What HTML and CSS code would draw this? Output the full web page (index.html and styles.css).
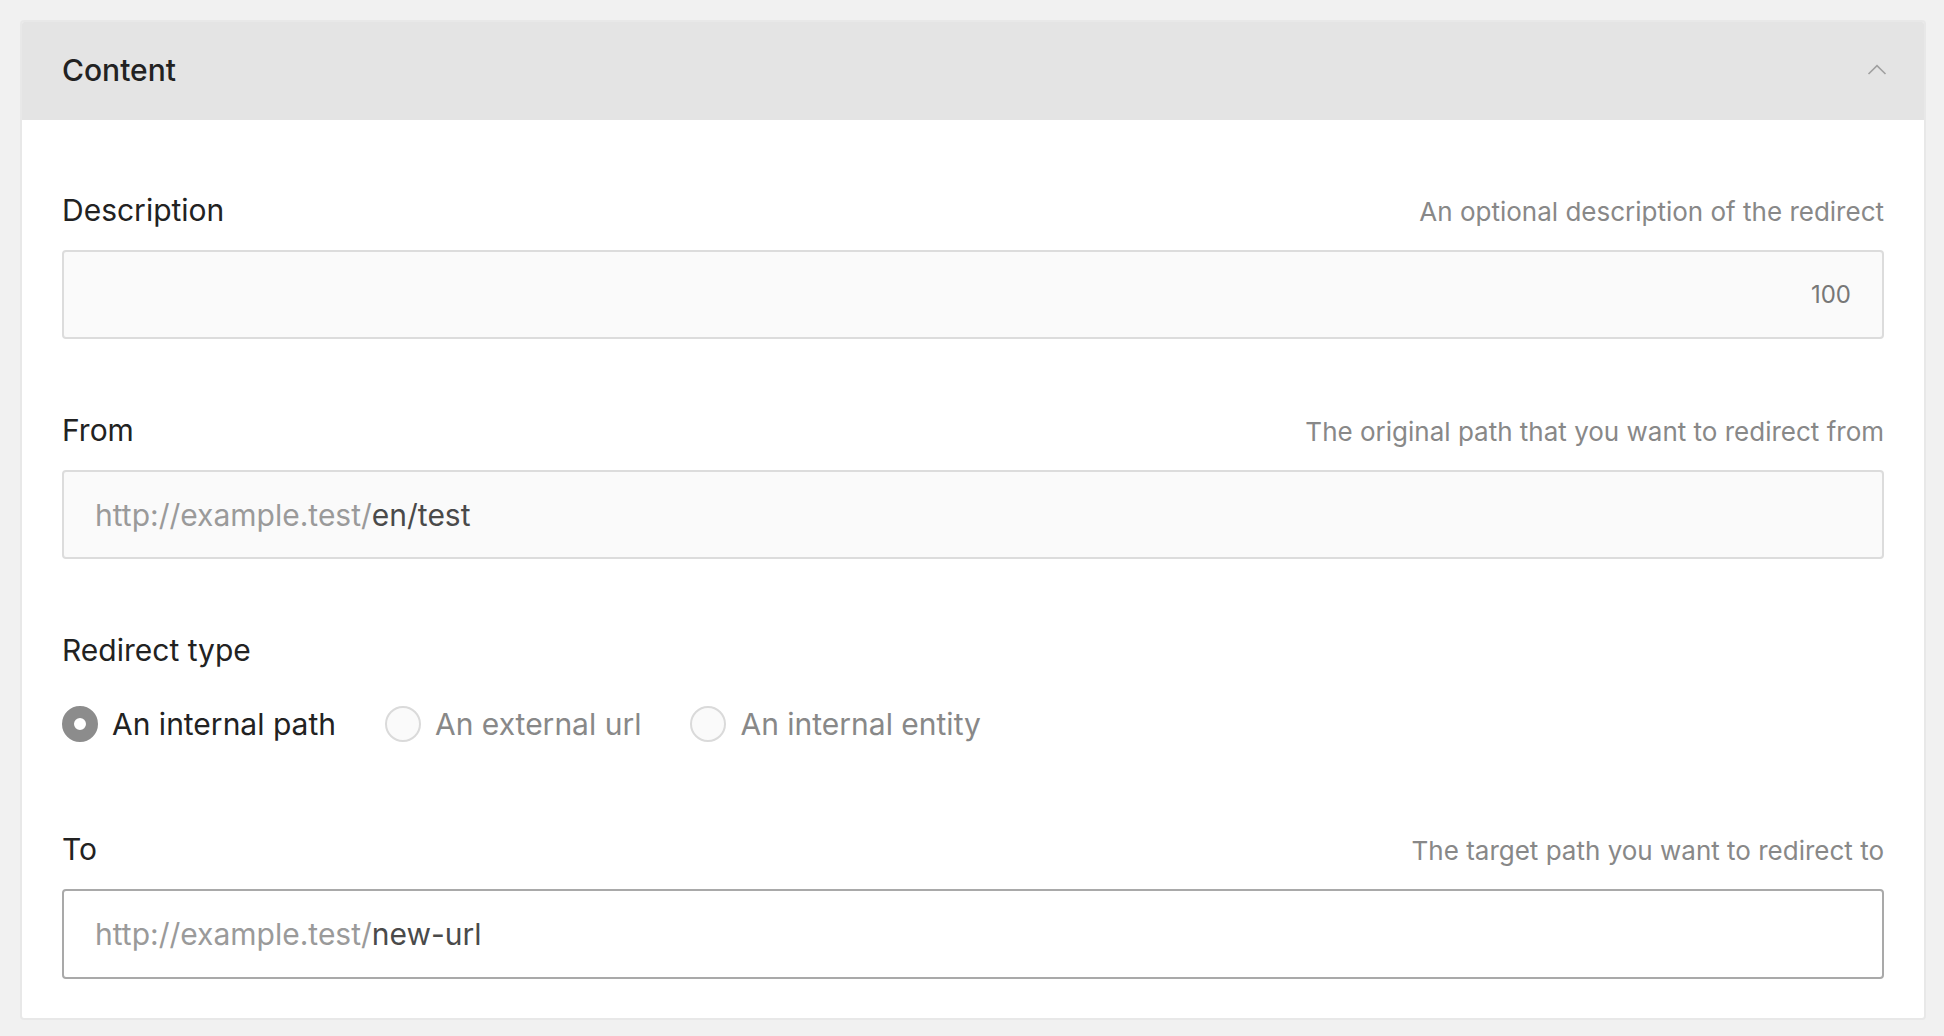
FILE: index.html
```html
<!DOCTYPE html>
<html lang="en">
<head>
<meta charset="utf-8">
<title>Content</title>
<link rel="stylesheet" href="styles.css">
</head>
<body>
<section class="card">
  <header class="card-header">
    <h2 class="card-title">Content</h2>
    <svg class="chevron" width="20" height="11" viewBox="0 0 20 11" aria-hidden="true">
      <polyline points="1.5,10 10,1.6 18.5,10" fill="none" stroke="#a0a0a0" stroke-width="1.6"/>
    </svg>
  </header>
  <div class="card-body">
    <div class="field">
      <div class="field-head">
        <label class="field-label">Description</label>
        <span class="field-hint">An optional description of the redirect</span>
      </div>
      <div class="input input-muted input-end">
        <span class="counter">100</span>
      </div>
    </div>

    <div class="field">
      <div class="field-head">
        <label class="field-label">From</label>
        <span class="field-hint">The original path that you want to redirect from</span>
      </div>
      <div class="input input-muted">
        <span class="prefix">http://example.test/</span><span class="value">en/test</span>
      </div>
    </div>

    <div class="field field-radios">
      <div class="field-head">
        <label class="field-label">Redirect type</label>
      </div>
      <div class="radio-group">
        <div class="radio-option">
          <span class="radio radio-checked"></span>
          <span class="radio-label radio-label-active">An internal path</span>
        </div>
        <div class="radio-option">
          <span class="radio"></span>
          <span class="radio-label">An external url</span>
        </div>
        <div class="radio-option">
          <span class="radio"></span>
          <span class="radio-label">An internal entity</span>
        </div>
      </div>
    </div>

    <div class="field">
      <div class="field-head">
        <label class="field-label">To</label>
        <span class="field-hint">The target path you want to redirect to</span>
      </div>
      <div class="input input-focus">
        <span class="prefix">http://example.test/</span><span class="value">new-url</span>
      </div>
    </div>
  </div>
</section>
</body>
</html>
```

FILE: styles.css
```css
* {
  box-sizing: border-box;
}

html, body {
  margin: 0;
  background: #f1f1f1;
}

body {
  padding: 20px 18px 16px 20px;
  font-family: Inter, "Noto Sans", sans-serif;
  color: #222;
}

.card {
  background: #ffffff;
  border: 2px solid #e8e8e8;
  border-radius: 4px;
  overflow: hidden;
}

.card-header {
  height: 100px;
  margin: -2px -2px 0 -2px;
  background: #e4e4e4;
  display: flex;
  align-items: center;
  justify-content: space-between;
  padding: 0 39px 0 42px;
}

.card-title {
  margin: 0;
  font-size: 30px;
  font-weight: 500;
  line-height: 36px;
  color: #222;
}

.chevron {
  display: block;
  margin-top: -2px;
}

.card-body {
  padding: 72px 40px 39px 40px;
  display: flex;
  flex-direction: column;
  gap: 73px;
}

.field {
  display: flex;
  flex-direction: column;
  gap: 22px;
}

.field-head {
  display: flex;
  justify-content: space-between;
  align-items: baseline;
  height: 36px;
}

.field-label {
  font-size: 30px;
  line-height: 36px;
  color: #222;
}

.field-hint {
  font-size: 26px;
  line-height: 26px;
  color: #888;
}

.input {
  height: 89px;
  border: 2px solid #dcdcdc;
  border-radius: 4px;
  display: flex;
  align-items: center;
  padding: 0 31px;
  font-size: 30px;
  white-space: nowrap;
}

.input-muted {
  background: #fafafa;
}

.input-focus {
  background: #ffffff;
  border-color: #a9a9a9;
  height: 90px;
}

.input-end {
  justify-content: flex-end;
}

.counter {
  font-size: 24px;
  color: #777;
}

.prefix {
  color: #9a9a9a;
}

.value {
  color: #4a4a4a;
}

.field-radios {
  gap: 38px;
  padding-bottom: 16px;
}

.radio-group {
  display: flex;
  align-items: center;
  gap: 49px;
}

.radio-option {
  display: flex;
  align-items: center;
  gap: 14px;
}

.radio {
  width: 36px;
  height: 36px;
  border-radius: 50%;
  border: 2px solid #dadada;
  background: #fafafa;
  flex: none;
}

.radio-checked {
  border: 12px solid #8c8c8c;
  background: #ffffff;
}

.radio-label {
  font-size: 30px;
  line-height: 36px;
  color: #888;
}

.radio-label-active {
  color: #222;
}
```
